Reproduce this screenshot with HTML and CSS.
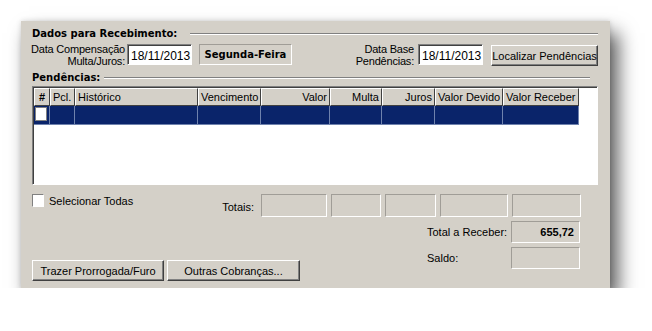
FILE: index.html
```html
<!DOCTYPE html>
<html lang="pt-BR">
<head>
  <meta charset="UTF-8" />
  <title>Dados para Recebimento</title>
  <link rel="stylesheet" href="styles.css">
</head>
<body>
  <div class="painel">
    <div class="secao secao-dados">
      <span>Dados para Recebimento:</span>
    </div>

    <div class="linha-datas">
      <label class="rotulo rotulo-comp">Data Compensação<br>Multa/Juros:</label>
      <div class="campo campo-data">18/11/2013</div>
      <div class="dia-semana">Segunda-Feira</div>
      <div class="espaco"></div>
      <label class="rotulo rotulo-base">Data Base<br>Pendências:</label>
      <div class="campo campo-data">18/11/2013</div>
      <button class="botao botao-localizar">Localizar Pendências</button>
    </div>

    <div class="secao secao-pend">
      <span>Pendências:</span>
    </div>

    <div class="grade">
      <div class="grade-cab">
        <div class="cel cel-centro cel-num">#</div>
        <div class="cel">Pcl.</div>
        <div class="cel">Histórico</div>
        <div class="cel">Vencimento</div>
        <div class="cel cel-dir">Valor</div>
        <div class="cel cel-dir">Multa</div>
        <div class="cel cel-dir">Juros</div>
        <div class="cel">Valor Devido</div>
        <div class="cel">Valor Receber</div>
      </div>
      <div class="grade-linha">
        <div class="cel"><span class="marca"></span></div>
        <div class="cel"></div>
        <div class="cel"></div>
        <div class="cel"></div>
        <div class="cel"></div>
        <div class="cel"></div>
        <div class="cel"></div>
        <div class="cel"></div>
        <div class="cel"></div>
      </div>
    </div>

    <div class="linha-totais">
      <label class="selecionar"><span class="caixa"></span>Selecionar Todas</label>
      <span class="rotulo-totais">Totais:</span>
      <div class="total t1"></div>
      <div class="total t2"></div>
      <div class="total t3"></div>
      <div class="total t4"></div>
      <div class="total t5"></div>
    </div>

    <div class="rodape">
      <div class="botoes">
        <button class="botao botao-trazer">Trazer Prorrogada/Furo</button>
        <button class="botao botao-outras">Outras Cobranças...</button>
      </div>
      <div class="resumo">
        <div class="resumo-linha">
          <span>Total a Receber:</span>
          <div class="total total-valor">655,72</div>
        </div>
        <div class="resumo-linha">
          <span>Saldo:</span>
          <div class="total"></div>
        </div>
      </div>
    </div>
  </div>
</body>
</html>
```

FILE: styles.css
```css
body {
  margin: 0;
  padding: 21px 0 0 21px;
  background: #fff;
  font-family: 'Liberation Sans', Arial, sans-serif;
  font-size: 11px;
  color: #000;
}
.painel {
  width: 589px;
  height: 267px;
  box-sizing: border-box;
  padding: 0 12px 0 11px;
  background: #d4d0c8;
  box-shadow: 8px 12px 18px rgba(0,0,0,0.65), 0 0 5px rgba(0,0,0,0.15);
}
.secao {
  display: flex;
  align-items: center;
  height: 13px;
  font-family: 'DejaVu Sans', sans-serif;
  font-weight: bold;
  font-size: 10px;
}
.secao::after {
  content: "";
  flex: 1;
  border-top: 1px solid #808080;
  border-bottom: 1px solid #fff;
}
.secao-dados {
  padding-top: 6px;
}
.secao-dados::after {
  margin-left: 13px;
}
.secao-pend {
  margin-top: 5px;
}
.secao-pend::after {
  margin-left: 4px;
  margin-right: 8px;
}
.linha-datas {
  display: flex;
  align-items: center;
  height: 23px;
  margin-top: 3px;
}
.rotulo {
  text-align: right;
  line-height: 12px;
  white-space: nowrap;
  letter-spacing: -0.2px;
}
.rotulo-comp {
  width: 94px;
  margin-left: -1px;
}
.campo {
  height: 21px;
  box-sizing: border-box;
  background: #fff;
  border: 1px solid;
  border-color: #808080 #fff #fff #808080;
  box-shadow: inset 1px 1px #404040;
  padding: 4px 0 0 3px;
  font-size: 12px;
}
.campo-data {
  width: 65px;
  margin-left: 2px;
}
.dia-semana {
  width: 93px;
  height: 21px;
  box-sizing: border-box;
  margin-left: 7px;
  border: 1px solid;
  border-color: #a09d97 #fff #fff #a09d97;
  font-family: 'DejaVu Sans', sans-serif;
  font-weight: bold;
  font-size: 10px;
  line-height: 19px;
  text-align: center;
}
.espaco {
  flex: 1;
}
.rotulo-base {
  margin-right: 2px;
}
.botao {
  height: 21px;
  box-sizing: border-box;
  background: #d4d0c8;
  border: 1px solid;
  border-color: #fff #404040 #404040 #fff;
  box-shadow: inset -1px -1px #808080;
  font-family: 'Liberation Sans', Arial, sans-serif;
  font-size: 11px;
  color: #000;
  padding: 0;
}
.botao-localizar {
  width: 107px;
  margin-left: 8px;
  margin-top: 2px;
}
.grade {
  height: 99px;
  margin-top: 2px;
  box-sizing: border-box;
  background: #fff;
  border: 1px solid;
  border-color: #808080 #fff #fff #808080;
  box-shadow: inset 1px 1px #404040;
  padding: 1px 0 0 1px;
}
.grade-cab, .grade-linha {
  display: grid;
  grid-template-columns: 16px 25px 123px 63px 69px 52px 53px 68px 76px;
}
.grade-cab .cel {
  height: 18px;
  box-sizing: border-box;
  background: #d4d0c8;
  border: 1px solid;
  border-color: #fff #404040 #404040 #fff;
  padding: 2px 2px 0;
  white-space: nowrap;
}
.cel-dir {
  text-align: right;
}
.cel-centro {
  text-align: center;
}
.cel-num {
  font-weight: bold;
}
.grade-linha .cel {
  height: 19px;
  box-sizing: border-box;
  background: #0a246a;
  border-right: 1px solid #6f82ad;
  border-bottom: 1px solid #6f82ad;
}
.marca {
  display: block;
  width: 12px;
  height: 14px;
  margin: 1px 0 0 1px;
  background: #fff;
  border: 1px solid #808080;
  box-sizing: border-box;
}
.linha-totais {
  display: flex;
  align-items: flex-start;
  margin-top: 9px;
  height: 23px;
}
.selecionar {
  display: flex;
  align-items: center;
  width: 160px;
}
.caixa {
  width: 12px;
  height: 13px;
  box-sizing: border-box;
  background: #fff;
  border: 1px solid;
  border-color: #808080 #fff #fff #808080;
  margin-right: 5px;
}
.rotulo-totais {
  width: 62px;
  text-align: right;
  margin-top: 7px;
}
.total {
  height: 23px;
  box-sizing: border-box;
  border: 1px solid;
  border-color: #a09d97 #fff #fff #a09d97;
}
.t1 { width: 66px; margin-left: 7px; }
.t2 { width: 50px; margin-left: 4px; }
.t3 { width: 51px; margin-left: 4px; }
.t4 { width: 68px; margin-left: 4px; }
.t5 { width: 69px; margin-left: 4px; }
.rodape {
  display: flex;
  justify-content: space-between;
  align-items: flex-start;
  margin-top: 4px;
}
.botoes {
  display: flex;
  gap: 3px;
  margin-top: 39px;
}
.botao-trazer {
  width: 132px;
}
.botao-outras {
  width: 133px;
}
.resumo {
  width: 153px;
  margin-right: 18px;
  display: flex;
  flex-direction: column;
  gap: 4px;
}
.resumo-linha {
  display: flex;
  justify-content: space-between;
  align-items: center;
}
.resumo-linha .total {
  width: 69px;
  height: 22px;
}
.total-valor {
  font-weight: bold;
  text-align: right;
  padding: 4px 5px 0 0;
}
```
